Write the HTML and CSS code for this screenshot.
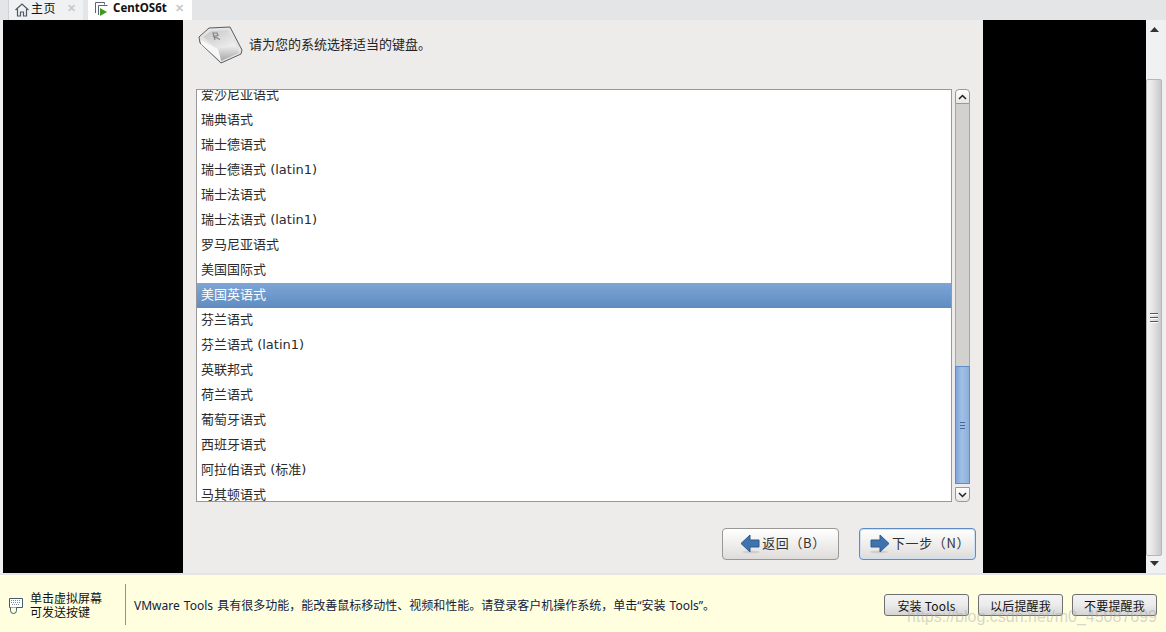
FILE: index.html
```html
<!DOCTYPE html>
<html lang="en">
<head>
  <meta charset="UTF-8" />
  <title>CentOS6t</title>
  <link rel="stylesheet" href="styles.css">
</head>
<body>
  <!-- Tabs -->
  <div class="tabs">
    <div class="tab">
      <svg class="tab-icon" width="16" height="16" viewBox="0 0 16 16"><path d="M1.500 8 8 2l6.500 6M3.500 7v7h3v-4h3v4h3V7" fill="none" stroke="#4d5a66" stroke-width="1.200"/></svg>
      <span class="tab-name">主页</span>
      <span class="tab-close">✕</span>
    </div>
    <div class="tab active">
      <svg class="tab-icon" width="16" height="16" viewBox="0 0 16 16"><path d="M2.500 12V1.500h9v2M5.500 14V4.500h9" fill="none" stroke="#5d6670"/><path d="M7 7l7 4-7 4z" fill="#3f9b1e"/></svg>
      <span class="tab-name">CentOS6t</span>
      <span class="tab-close">✕</span>
    </div>
  </div>

  <div class="main">
    <div class="guest-side left"></div>

    <!-- Installer screen -->
    <div class="panel">
      <div class="panel-head">
        <svg class="key-icon" width="46" height="38" viewBox="0 0 46 38">
          <defs>
            <linearGradient id="keyTop" x1="0" y1="0" x2="1" y2="1">
              <stop offset="0" stop-color="#c4c4c4"/><stop offset="1" stop-color="#f4f4f4"/>
            </linearGradient>
            <linearGradient id="keyFront" x1="0" y1="0" x2="0" y2="1">
              <stop offset="0" stop-color="#ececec"/><stop offset="1" stop-color="#a6a6a6"/>
            </linearGradient>
          </defs>
          <path d="M2 11 12 2 33 1l12 23-1 4-20 9L3 17z" fill="#e4e4e4" stroke="#5c5c5c"/>
          <path d="M6 11 14 5l17-1 8 16-18 3z" fill="url(#keyTop)"/>
          <path d="M21 23l18-3 3 7-18 8z" fill="url(#keyFront)"/>
          <path d="M4 14l17 9 3 12-20-17z" fill="#f7f7f7"/>
          <path d="M18 14 16 7h4l1 2.500-4 1 6 3" fill="none" stroke="#858585" stroke-width="1.200"/>
        </svg>
        <span class="head-text">请为您的系统选择适当的键盘。</span>
      </div>

      <div class="list-area">
        <div class="list">
          <div class="rows">
            <div class="row">爱沙尼亚语式</div>
            <div class="row">瑞典语式</div>
            <div class="row">瑞士德语式</div>
            <div class="row">瑞士德语式 (latin1)</div>
            <div class="row">瑞士法语式</div>
            <div class="row">瑞士法语式 (latin1)</div>
            <div class="row">罗马尼亚语式</div>
            <div class="row">美国国际式</div>
            <div class="row selected">美国英语式</div>
            <div class="row">芬兰语式</div>
            <div class="row">芬兰语式 (latin1)</div>
            <div class="row">英联邦式</div>
            <div class="row">荷兰语式</div>
            <div class="row">葡萄牙语式</div>
            <div class="row">西班牙语式</div>
            <div class="row">阿拉伯语式 (标准)</div>
            <div class="row">马其顿语式</div>
          </div>
        </div>
        <div class="list-scroll">
          <div class="step up"><svg width="9" height="6" viewBox="0 0 9 6"><path d="M1 5l3.500-3.500L8 5" fill="none" stroke="#222" stroke-width="1.500"/></svg></div>
          <div class="trough">
            <div class="thumb"><i></i><i></i><i></i></div>
          </div>
          <div class="step down"><svg width="9" height="6" viewBox="0 0 9 6"><path d="M1 1l3.500 3.500L8 1" fill="none" stroke="#222" stroke-width="1.500"/></svg></div>
        </div>
      </div>

      <div class="actions">
        <div class="btn">
          <svg width="20" height="20" viewBox="0 0 20 20"><ellipse cx="11" cy="18" rx="9" ry="1.500" fill="#cfcfcf"/><path d="M1 9.500 10 1v5h9v7h-9v5z" fill="#3f73ad" stroke="#2c5a93"/></svg>
          <span>返回（B）</span>
        </div>
        <div class="btn focused">
          <svg width="20" height="20" viewBox="0 0 20 20"><ellipse cx="9" cy="18" rx="9" ry="1.500" fill="#cfcfcf"/><path d="M19 9.500 10 1v5H1v7h9v5z" fill="#3f73ad" stroke="#2c5a93"/></svg>
          <span>下一步（N）</span>
        </div>
      </div>
    </div>

    <div class="guest-side right"></div>

    <!-- VM window scrollbar -->
    <div class="vm-scroll">
      <div class="vm-arrow"><svg width="9" height="5" viewBox="0 0 9 5"><path d="M0 5 4.500 0 9 5z" fill="#333"/></svg></div>
      <div class="vm-thumb"><i></i><i></i><i></i></div>
      <div class="vm-arrow"><svg width="9" height="5" viewBox="0 0 9 5"><path d="M0 0 4.500 5 9 0z" fill="#333"/></svg></div>
    </div>
  </div>

  <!-- Hint bar -->
  <div class="hint">
    <svg class="hint-icon" width="16" height="18" viewBox="0 0 16 18">
      <path d="M1.500 1.500h13v9h-13z" fill="#fff" stroke="#3f5f6f"/>
      <path d="M3 3.500h10M3 5.500h10M4 7.500h8" stroke="#7f8f9c" stroke-dasharray="1 1"/>
      <path d="M2.500 10.500v3a3 3 0 0 0 6 0v-3" fill="#ffffdf" stroke="#3f5f6f"/>
    </svg>
    <div class="hint-left">单击虚拟屏幕<br>可发送按键</div>
    <div class="hint-msg">VMware Tools 具有很多功能，能改善鼠标移动性、视频和性能。请登录客户机操作系统，单击“安装 Tools”。</div>
    <div class="hint-btns">
      <div class="hint-btn">安装 Tools</div>
      <div class="hint-btn">以后提醒我</div>
      <div class="hint-btn">不要提醒我</div>
    </div>
    <div class="watermark">https://blog.csdn.net/m0_45087699</div>
  </div>
</body>
</html>
```

FILE: styles.css
```css
html, body {
  margin: 0;
  height: 100%;
  overflow: hidden;
}
body {
  width: 1166px;
  height: 632px;
  background: #e3e5e7;
  font-family: "DejaVu Sans", "Noto Sans CJK SC", sans-serif;
  font-size: 13px;
  color: #222;
}

/* tabs */
.tabs {
  display: flex;
  height: 20px;
  padding-left: 8px;
  gap: 5px;
  background: #e3e5e7;
}
.tab {
  display: flex;
  align-items: center;
  width: 75px;
  padding: 0 0 6px 5px;
  box-sizing: border-box;
  background: #f0f1f2;
  border-left: 1px solid #cfd2d5;
  font-family: "Noto Sans CJK SC", sans-serif;
  font-size: 12px;
  color: #111;
}
.tab.active {
  width: 104px;
  background: #fff;
  border-left: 0;
}
.tab-icon {
  margin: 5px 1px 0 0;
  flex: none;
}
.tab-name { letter-spacing: 0.5px; }
.active .tab-icon { margin: 4px 4px 0 0; }
.active .tab-name {
  font-family: "Noto Sans", sans-serif;
  font-weight: 700;
  font-size: 11.500px;
  letter-spacing: 0;
}
.tab-close {
  margin-left: 11px;
  font-size: 11px;
  font-weight: 700;
  color: #c8cacc;
}
.active .tab-close { margin-left: 8px; }

/* main */
.main {
  display: flex;
  height: 553px;
  padding: 0 4px 0 3px;
  background: #eef0f1;
}
.guest-side { background: #000; }
.guest-side.left { width: 180px; }
.guest-side.right { width: 163px; }
.panel {
  width: 800px;
  background: #edeceb;
  display: flex;
  flex-direction: column;
}
.panel-head {
  display: flex;
  align-items: flex-start;
  height: 69px;
  padding: 6px 0 0 14px;
  gap: 6px;
  box-sizing: border-box;
}
.key-icon { flex: none; }
.head-text {
  margin-top: 10px;
  line-height: 18px;
}

.list-area {
  display: flex;
  height: 413px;
  margin-left: 13px;
}
.list {
  width: 756px;
  box-sizing: border-box;
  height: 413px;
  background: #fff;
  border: 1px solid #9a9896;
  overflow: hidden;
}
.rows { margin-top: -7px; }
.row {
  height: 25px;
  line-height: 24px;
  padding-left: 4px;
  color: #2b2b2b;
}
.row.selected {
  background: linear-gradient(#7ea5d6, #5f8cc0);
  color: #fff;
}
.list-scroll {
  display: flex;
  flex-direction: column;
  width: 15px;
  margin-left: 3px;
}
.step {
  display: flex;
  align-items: center;
  justify-content: center;
  height: 15px;
  box-sizing: border-box;
  border: 1px solid #9a9896;
  background: linear-gradient(#fff, #e8e7e5);
}
.step.up { border-radius: 4px 4px 0 0; }
.step.down {
  height: 15px;
  border-radius: 0 0 4px 4px;
  margin-top: 3px;
}
.trough {
  flex: 1;
  display: flex;
  flex-direction: column;
  justify-content: flex-end;
  background: #d3d1ce;
  border: solid #a8a6a3;
  border-width: 0 1px;
}
.thumb {
  height: 118px;
  box-sizing: border-box;
  margin: 0 -1px;
  background: linear-gradient(90deg, #7ea6d8, #a2c0e4 45%, #8bafdc);
  border: 1px solid #5f8cc4;
  display: flex;
  flex-direction: column;
  align-items: center;
  justify-content: center;
  gap: 2px;
}
.thumb i {
  width: 5px;
  height: 1px;
  background: #44689a;
}

.actions {
  display: flex;
  justify-content: flex-end;
  gap: 20px;
  padding: 26px 7px 0 0;
}
.btn {
  display: flex;
  align-items: center;
  justify-content: center;
  width: 117px;
  height: 32px;
  box-sizing: border-box;
  gap: 2px;
  padding: 0 0 1px 5px;
  border: 1px solid #9a9896;
  border-radius: 4px;
  background: linear-gradient(#fff, #ecebe9 60%, #dddcda);
  font-family: "Noto Sans CJK SC", sans-serif;
  letter-spacing: 0.6px;
  color: #333;
}
.btn span { margin-bottom: 2px; }
.btn.focused {
  border-color: #5f8cc4;
  box-shadow: inset 0 0 0 1px #cfe0f3;
}

/* window scrollbar */
.vm-scroll {
  display: flex;
  flex-direction: column;
  width: 16px;
  background: #eff1f2;
}
.vm-arrow {
  display: flex;
  align-items: flex-start;
  justify-content: center;
  height: 52px;
  padding-top: 7px;
  flex: none;
}
.vm-arrow:last-child {
  height: 12px;
  padding-top: 5px;
}
.vm-thumb {
  flex: 1;
  display: flex;
  flex-direction: column;
  align-items: center;
  justify-content: center;
  gap: 2px;
  border: 1px solid #b4b6b8;
  border-radius: 2px;
  background: linear-gradient(90deg, #f4f4f4, #e6e6e6 40%, #c8c9ca);
}
.vm-thumb i {
  width: 8px;
  height: 1px;
  background: #555;
  border-bottom: 1px solid #fff;
}

/* hint bar */
.hint {
  position: relative;
  display: flex;
  align-items: center;
  height: 57px;
  margin-top: 2px;
  box-sizing: border-box;
  background: #ffffdf;
  font-family: "Noto Sans CJK SC", sans-serif;
  font-size: 12px;
  color: #111;
}
.hint-icon {
  flex: none;
  margin: 4px 6px 0 8px;
}
.hint-left {
  width: 96px;
  height: 41px;
  line-height: 14px;
  padding-top: 7px;
  margin-top: 1px;
  box-sizing: border-box;
  border-right: 1px solid #8f9396;
}
.hint-msg {
  margin: 2px 0 0 8px;
  word-spacing: 1px;
  color: #10213f;
  font-family: "Noto Sans", "Noto Sans CJK SC", sans-serif;
}
.hint-btns {
  display: flex;
  gap: 9px;
  margin: 3px 9px 0 auto;
}
.hint-btn {
  width: 85px;
  height: 22px;
  box-sizing: border-box;
  border: 1px solid #707070;
  border-radius: 3px;
  text-align: center;
  line-height: 21px;
  letter-spacing: 0.2px;
  background: linear-gradient(#f3f3f3, #ebebeb 50%, #d4d4d4);
}
.watermark {
  position: absolute;
  right: 9px;
  bottom: 6px;
  font-family: "Liberation Sans", sans-serif;
  font-size: 16px;
  color: rgba(165, 165, 165, 0.45);
}
```
